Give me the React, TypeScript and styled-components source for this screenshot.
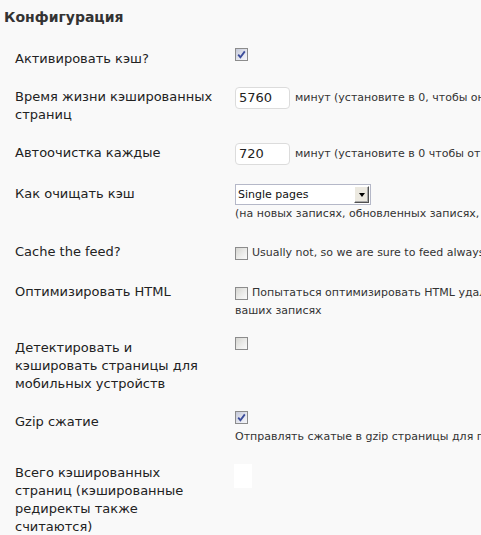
import React from "react";
import styled, { createGlobalStyle } from "styled-components";

const Global = createGlobalStyle`
  html, body { margin: 0; padding: 0; background: #f9f9f9; overflow: hidden; }
  body { font-family: "DejaVu Sans", Verdana, sans-serif; color: #333; }
`;

const Page = styled.div`
  padding: 7px 0 0 4px;
  width: 900px;
`;

const Title = styled.h2`
  margin: 0 0 13px;
  font-size: 14px;
  line-height: 20px;
  font-weight: bold;
  color: #333;
`;

const Row = styled.div`
  display: flex;
  align-items: flex-start;
`;

const Label = styled.div`
  flex: 0 0 200px;
  padding: 10px 10px 10px 11px;
  font-size: 13px;
  line-height: 18px;
  color: #222;
`;

const Field = styled.div`
  flex: 1;
  padding: 10px;
  font-size: 11px;
  line-height: 18px;
  color: #333;
  white-space: nowrap;
  display: flex;
  flex-direction: column;
  align-items: flex-start;
`;

const Box = styled.span<{ $checked?: boolean; $alone?: boolean }>`
  display: inline-flex;
  flex: 0 0 13px;
  width: 13px;
  height: 13px;
  box-sizing: border-box;
  border: 1px solid #8c8c8c;
  background: ${(p) =>
    p.$checked
      ? "linear-gradient(135deg, #c4c8d8 0%, #e6e8f0 60%, #f6f6fa 100%)"
      : "linear-gradient(135deg, #d6d6d2 0%, #ececea 55%, #fbfbfb 100%)"};
  margin-top: ${(p) => (p.$alone ? "-2px" : "0")};
  align-items: center;
  justify-content: center;
`;

const CheckLine = styled.div`
  display: flex;
  align-items: flex-start;
  height: 16px;
`;

const InlineLine = styled.div`
  display: flex;
  align-items: center;
  height: 20px;
  gap: 4px;
`;

const Desc = styled.div<{ $lh?: number }>`
  line-height: ${(p) => p.$lh ?? 18}px;
`;

const InputLine = styled.div`
  display: flex;
  align-items: center;
  gap: 5px;
  margin-top: -1px;
`;

const TextInput = styled.div`
  width: 55px;
  height: 22px;
  box-sizing: border-box;
  border: 1px solid #dcdcdc;
  border-radius: 4px;
  background: #fff;
  font-size: 13px;
  line-height: 20px;
  padding-left: 3px;
  color: #222;
`;

const Select = styled.div`
  width: 136px;
  height: 21px;
  box-sizing: border-box;
  border: 1px solid #b5b8c8;
  background: #fff;
  display: flex;
  align-items: center;
  justify-content: space-between;
  margin-top: -1px;
  padding: 1px;
  font-size: 11px;
  color: #111;
`;

const SelectText = styled.span`
  padding-left: 1px;
`;

const DropButton = styled.span`
  width: 15px;
  height: 17px;
  box-sizing: border-box;
  background: #ece9e0;
  border-top: 1px solid #fff;
  border-left: 1px solid #fff;
  border-right: 1px solid #505050;
  border-bottom: 1px solid #505050;
  box-shadow: inset -1px -1px 0 #a8a8a8;
  display: flex;
  align-items: center;
  justify-content: center;
  &::after {
    content: "";
    width: 0;
    height: 0;
    border-left: 3.5px solid transparent;
    border-right: 3.5px solid transparent;
    border-top: 4px solid #000;
  }
`;

const Blank = styled.div`
  width: 18px;
  height: 24px;
  background: #fff;
  margin-left: -1px;
`;

function Checkbox({ checked, alone }: { checked?: boolean; alone?: boolean }) {
  return (
    <Box $checked={checked} $alone={alone}>
      {checked && (
        <svg width="9" height="9" viewBox="0 0 9 9">
          <path d="M1.2 4.6 L3.4 7.2 L7.8 1.4" fill="none" stroke="#3b4c9b" strokeWidth="1.8" />
        </svg>
      )}
    </Box>
  );
}

export default function App() {
  return (
    <>
      <Global />
      <Page>
        <Title>Конфигурация</Title>

        <Row>
          <Label>Активировать кэш?</Label>
          <Field>
            <CheckLine>
              <Checkbox checked alone />
            </CheckLine>
          </Field>
        </Row>

        <Row>
          <Label>Время жизни кэшированных страниц</Label>
          <Field>
            <InputLine>
              <TextInput>5760</TextInput>
              <span>минут (установите в 0, чтобы они никогда не устаревали)</span>
            </InputLine>
          </Field>
        </Row>

        <Row>
          <Label>Автоочистка каждые</Label>
          <Field>
            <InputLine>
              <TextInput>720</TextInput>
              <span>минут (установите в 0 чтобы отключить)</span>
            </InputLine>
          </Field>
        </Row>

        <Row>
          <Label>Как очищать кэш</Label>
          <Field>
            <Select>
              <SelectText>Single pages</SelectText>
              <DropButton />
            </Select>
            <Desc>(на новых записях, обновленных записях, комментариях)</Desc>
          </Field>
        </Row>

        <Row>
          <Label>Cache the feed?</Label>
          <Field>
            <InlineLine>
              <Checkbox />
              <span>Usually not, so we are sure to feed always fresh content</span>
            </InlineLine>
          </Field>
        </Row>

        <Row>
          <Label>Оптимизировать HTML</Label>
          <Field>
            <InlineLine>
              <Checkbox />
              <span>Попытаться оптимизировать HTML удаляя лишние пробелы и переносы строк в</span>
            </InlineLine>
            <Desc $lh={16}>ваших записях</Desc>
          </Field>
        </Row>

        <Row>
          <Label>Детектировать и кэшировать страницы для мобильных устройств</Label>
          <Field>
            <CheckLine>
              <Checkbox alone />
            </CheckLine>
          </Field>
        </Row>

        <Row>
          <Label>Gzip сжатие</Label>
          <Field>
            <CheckLine>
              <Checkbox checked alone />
            </CheckLine>
            <Desc $lh={15}>Отправлять сжатые в gzip страницы для поддерживающих браузеров</Desc>
          </Field>
        </Row>

        <Row>
          <Label>Всего кэшированных страниц (кэшированные редиректы также считаются)</Label>
          <Field>
            <Blank />
          </Field>
        </Row>
      </Page>
    </>
  );
}
